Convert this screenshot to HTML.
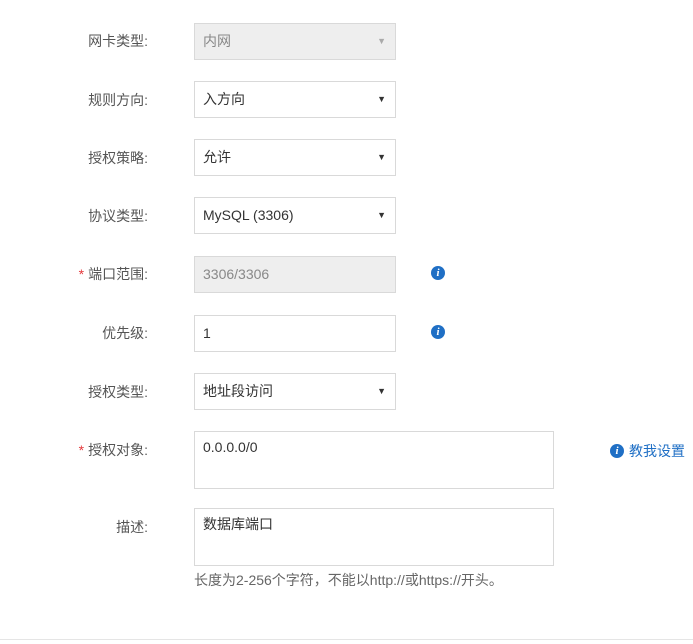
<!DOCTYPE html>
<html><head><meta charset="utf-8"><style>
body{margin:0;width:693px;height:644px;background:#fff;font-family:"Liberation Sans","Noto Sans CJK SC",sans-serif;font-size:14px;color:#333;position:relative;overflow:hidden}
.l{position:absolute;right:545px;width:130px;text-align:right;color:#555;line-height:16px}
.l .s{color:#e4393c;margin-right:4px}
.b{position:absolute;left:194px;width:202px;height:37px;border:1px solid #d9d9d9;box-sizing:border-box;background:#fff;line-height:35px;padding-left:8px;color:#333}
.b.d{background:#eee;color:#888}
.b .a{position:absolute;right:9px;top:0;font-size:9px;color:#333}
.b.d .a{color:#aaa}
.t{width:360px;height:58px;line-height:18px;padding-top:6px}
.i{position:absolute;width:14px;height:14px;border-radius:50%;background:#1f6fc5;color:#fff;font-size:11px;font-style:italic;font-weight:bold;text-align:center;line-height:14px;font-family:"Liberation Serif",serif}
</style></head><body>
<div class="l" style="top:33px">网卡类型:</div>
<div class="b d" style="top:23px">内网<span class="a">▼</span></div>
<div class="l" style="top:92px">规则方向:</div>
<div class="b" style="top:81px">入方向<span class="a">▼</span></div>
<div class="l" style="top:150px">授权策略:</div>
<div class="b" style="top:139px">允许<span class="a">▼</span></div>
<div class="l" style="top:208px">协议类型:</div>
<div class="b" style="top:197px">MySQL (3306)<span class="a">▼</span></div>
<div class="l" style="top:266px"><span class="s">*</span>端口范围:</div>
<div class="b d" style="top:256px">3306/3306</div>
<div class="i" style="left:431px;top:266px">i</div>
<div class="l" style="top:325px">优先级:</div>
<div class="b" style="top:315px">1</div>
<div class="i" style="left:431px;top:325px">i</div>
<div class="l" style="top:384px">授权类型:</div>
<div class="b" style="top:373px">地址段访问<span class="a">▼</span></div>
<div class="l" style="top:442px"><span class="s">*</span>授权对象:</div>
<div class="b t" style="top:431px">0.0.0.0/0</div>
<div class="i" style="left:610px;top:444px">i</div>
<div style="position:absolute;left:629px;top:443px;color:#1f6fc5;line-height:16px">教我设置</div>
<div class="l" style="top:519px">描述:</div>
<div class="b t" style="top:508px">数据库端口</div>
<div style="position:absolute;left:194px;top:572px;color:#666;line-height:16px">长度为2-256个字符，不能以http://或https://开头。</div>
<div style="position:absolute;left:0;right:0;top:639px;height:1px;background:#e5e5e5"></div>
</body></html>
